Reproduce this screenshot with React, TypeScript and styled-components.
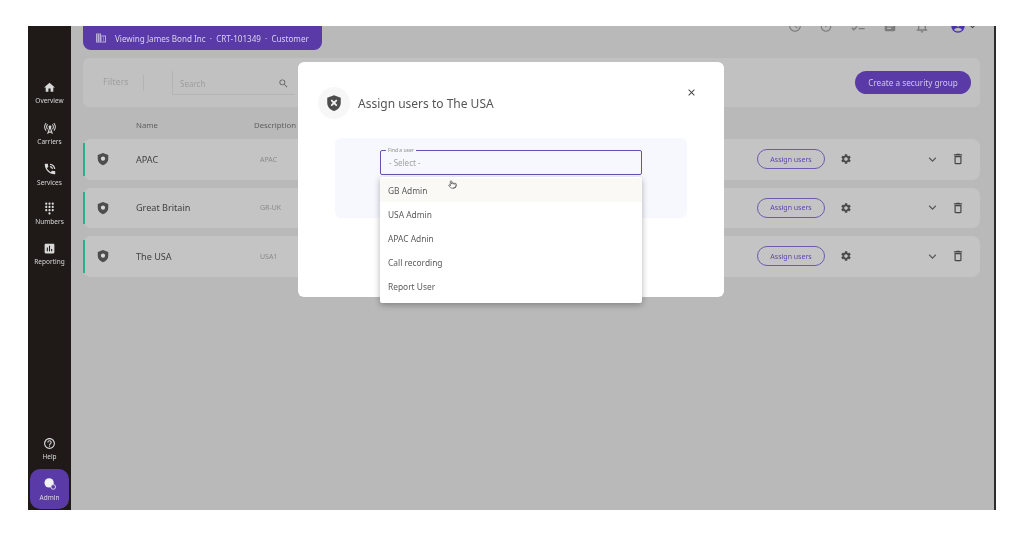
import React, { FC } from 'react';
import styled, { createGlobalStyle } from 'styled-components';
import {
  MdHome,
  MdCellTower,
  MdPhoneInTalk,
  MdDialpad,
  MdAssessment,
  MdHelpOutline,
  MdOutlineDomain,
  MdSearch,
  MdSettings,
  MdExpandMore,
  MdDeleteOutline,
  MdClose,
  MdAccessTime,
  MdOutlineTimer,
  MdChecklist,
  MdAssignment,
  MdNotificationsNone,
  MdAccountCircle,
} from 'react-icons/md';
import { Pointer } from 'lucide-react';

const GlobalStyle = createGlobalStyle`
  html, body {
    margin: 0;
    background: #fff;
  }
  * {
    box-sizing: border-box;
  }
  body {
    font-family: "Noto Sans", "Open Sans", sans-serif;
  }
`;

const ShieldIcon: FC<{ size: number; mark?: 'dot' | 'x' }> = ({ size, mark = 'dot' }) => (
  <svg width={size} height={size} viewBox="0 0 24 24">
    <path d="M12 1.5 21 5v6.5c0 5.4-3.7 9.4-9 11-5.3-1.6-9-5.6-9-11V5z" fill="#4d4d4d" />
    {mark === 'dot' ? (
      <circle cx="12" cy="11.5" r="3.6" fill="#d8d8d8" />
    ) : (
      <path d="M9 8.7 15 14.7M15 8.7 9 14.7" stroke="#f2f2f2" strokeWidth="2.4" strokeLinecap="round" />
    )}
  </svg>
);

const AdminIcon: FC = () => (
  <svg width={14} height={14} viewBox="0 0 24 24">
    <circle cx="10.5" cy="10" r="8" fill="#f2f2f2" />
    <circle cx="17.5" cy="17" r="4" fill="#5a3aa6" stroke="#e4def2" strokeWidth="1.6" />
  </svg>
);

const navItems = [
  { label: 'Overview', icon: <MdHome size={13} /> },
  { label: 'Carriers', icon: <MdCellTower size={14} /> },
  { label: 'Services', icon: <MdPhoneInTalk size={14} /> },
  { label: 'Numbers', icon: <MdDialpad size={13} /> },
  { label: 'Reporting', icon: <MdAssessment size={13} /> },
];

const groups = [
  { name: 'APAC', code: 'APAC' },
  { name: 'Great Britain', code: 'GR-UK' },
  { name: 'The USA', code: 'USA1' },
];

const users = ['GB Admin', 'USA Admin', 'APAC Adnin', 'Call recording', 'Report User'];

const App: FC = () => (
  <>
    <GlobalStyle />
    <Page>
      <Frame>
        <Sidebar>
          <NavList>
            {navItems.map(item => (
              <NavItem key={item.label}>
                {item.icon}
                <span>{item.label}</span>
              </NavItem>
            ))}
          </NavList>
          <NavItem>
            <MdHelpOutline size={13} />
            <span>Help</span>
          </NavItem>
          <AdminButton>
            <AdminIcon />
            <span>Admin</span>
          </AdminButton>
        </Sidebar>

        <Main>
          <TopBar>
            <Banner>
              <MdOutlineDomain size={12} color="#b9addb" />
              <span>Viewing James Bond Inc &nbsp;·&nbsp; CRT-101349 &nbsp;·&nbsp; Customer</span>
            </Banner>
            <TopIcons>
              <MdAccessTime size={14} />
              <MdOutlineTimer size={14} />
              <MdChecklist size={16} />
              <MdAssignment size={14} />
              <MdNotificationsNone size={16} />
              <Avatar>
                <MdAccountCircle size={16} color="#4b33a8" />
                <MdExpandMore size={11} color="#333" />
              </Avatar>
            </TopIcons>
          </TopBar>

          <FilterBar>
            <FiltersLabel>Filters</FiltersLabel>
            <SearchBox>
              <span>Search</span>
              <MdSearch size={11} color="#666" />
            </SearchBox>
            <CreateButton>Create a security group</CreateButton>
          </FilterBar>

          <TableHead>
            <NameHead>Name</NameHead>
            <span>Description</span>
          </TableHead>

          <Rows>
            {groups.map(group => (
              <Row key={group.name}>
                <RowIcon>
                  <ShieldIcon size={14} />
                </RowIcon>
                <RowName>{group.name}</RowName>
                <RowCode>{group.code}</RowCode>
                <AssignButton>Assign users</AssignButton>
                <MdSettings size={12} color="#4a4a4a" />
                <RowEnd>
                  <MdExpandMore size={15} color="#5a5a5a" />
                  <MdDeleteOutline size={14} color="#444" />
                </RowEnd>
              </Row>
            ))}
          </Rows>
        </Main>

        <Overlay>
          <Modal>
            <ModalHead>
              <ModalBadge>
                <ShieldIcon size={18} mark="x" />
              </ModalBadge>
              <ModalTitle>Assign users to The USA</ModalTitle>
              <CloseButton>
                <MdClose size={11} />
              </CloseButton>
            </ModalHead>
            <ModalPanel>
              <SelectField>
                <SelectLabel>Find a user</SelectLabel>
                - Select -
              </SelectField>
              <Dropdown>
                {users.map((user, i) => (
                  <Option key={user} active={i === 0}>
                    {user}
                  </Option>
                ))}
                <Cursor>
                  <Pointer size={9} strokeWidth={2} />
                </Cursor>
              </Dropdown>
            </ModalPanel>
          </Modal>
        </Overlay>
      </Frame>
    </Page>
  </>
);

export default App;

const Page = styled.div`
  width: 1024px;
  height: 536px;
  padding: 26px 28px;
  background: #fff;
  overflow: hidden;
`;

const Frame = styled.div`
  position: relative;
  display: flex;
  width: 968px;
  height: 484px;
  overflow: hidden;
  background: #b9b9b9;
  border-right: 2px solid #2b2b2b;
  filter: blur(0.3px);
`;

const Sidebar = styled.nav`
  display: flex;
  flex-direction: column;
  align-items: center;
  flex: 0 0 43px;
  padding: 55px 0 1px;
  background: #1f1a18;
`;

const NavList = styled.div`
  display: flex;
  flex: 1;
  flex-direction: column;
`;

const NavItem = styled.div`
  display: flex;
  flex-direction: column;
  align-items: center;
  gap: 2px;
  height: 40.3px;
  color: #d8d8d8;
  font-size: 6.5px;
  line-height: 9px;
  white-space: nowrap;
  svg {
    flex-shrink: 0;
  }
`;

const AdminButton = styled.div`
  display: flex;
  flex-direction: column;
  align-items: center;
  justify-content: center;
  gap: 2px;
  width: 39px;
  height: 40px;
  margin-top: -8px;
  border-radius: 10px;
  background: #5a3aa6;
  color: #ddd6ee;
  font-size: 6.5px;
  line-height: 9px;
`;

const Main = styled.main`
  display: flex;
  flex: 1;
  flex-direction: column;
  min-width: 0;
  padding: 0 14px 0 12px;
`;

const TopBar = styled.div`
  display: flex;
  justify-content: space-between;
  align-items: flex-start;
  height: 32px;
`;

const Banner = styled.div`
  display: flex;
  align-items: center;
  gap: 8px;
  width: 239px;
  height: 24px;
  padding-left: 12px;
  border-radius: 0 0 8px 8px;
  background: #5a3aa6;
  color: #d9d2ec;
  font-size: 8.1px;
  white-space: nowrap;
`;

const TopIcons = styled.div`
  display: flex;
  align-items: center;
  gap: 17px;
  height: 14px;
  margin-top: -7px;
  padding-right: 2px;
  color: #7c7c7c;
`;

const Avatar = styled.div`
  display: flex;
  align-items: center;
  gap: 1px;
  margin-left: 3px;
`;

const FilterBar = styled.div`
  display: flex;
  align-items: center;
  height: 49px;
  padding: 0 9px 0 20px;
  border-radius: 6px;
  background: #c1c1c1;
`;

const FiltersLabel = styled.div`
  width: 41px;
  height: 16px;
  border-right: 1px solid #b4b4b4;
  color: #a0a0a0;
  font-size: 9px;
  line-height: 14px;
`;

const SearchBox = styled.div`
  display: flex;
  align-items: center;
  justify-content: space-between;
  width: 123px;
  height: 24px;
  margin-left: 28px;
  padding: 2px 6px 0 7px;
  border-left: 1px solid #b4b4b4;
  border-bottom: 1px solid #b4b4b4;
  color: #9e9e9e;
  font-size: 8px;
`;

const CreateButton = styled.div`
  display: flex;
  align-items: center;
  justify-content: center;
  width: 116px;
  height: 23px;
  margin-left: auto;
  border-radius: 12px;
  background: #5a3aa6;
  color: #cfc6e6;
  font-size: 8.2px;
  white-space: nowrap;
`;

const TableHead = styled.div`
  display: flex;
  align-items: center;
  height: 32px;
  padding-top: 4px;
  color: #5f5f5f;
  font-size: 7.8px;
`;

const NameHead = styled.span`
  width: 171px;
  padding-left: 53px;
`;

const Rows = styled.div`
  display: flex;
  flex-direction: column;
  gap: 8px;
`;

const Row = styled.div`
  position: relative;
  display: flex;
  align-items: center;
  height: 40.5px;
  border-radius: 8px;
  background: #c4c4c4;
  &::before {
    content: '';
    position: absolute;
    left: 0;
    top: 4px;
    bottom: 4px;
    width: 1.5px;
    background: #27b08f;
  }
`;

const RowIcon = styled.div`
  display: flex;
  width: 53px;
  padding-left: 13px;
`;

const RowName = styled.div`
  width: 124px;
  color: #414141;
  font-size: 9.1px;
`;

const RowCode = styled.div`
  width: 497px;
  color: #8a8a8a;
  font-size: 7px;
`;

const AssignButton = styled.div`
  display: flex;
  align-items: center;
  justify-content: center;
  width: 68px;
  height: 20px;
  margin-right: 15px;
  border: 1px solid #6f5ab0;
  border-radius: 10px;
  color: #5f45ae;
  font-size: 7px;
  white-space: nowrap;
`;

const RowEnd = styled.div`
  display: flex;
  align-items: center;
  gap: 11px;
  margin-left: auto;
  padding-right: 15px;
`;

const Overlay = styled.div`
  position: absolute;
  inset: 0;
  display: flex;
  justify-content: center;
  padding-top: 36px;
`;

const Modal = styled.div`
  width: 426px;
  height: 235px;
  padding: 26px 37px 0;
  border-radius: 6px;
  background: #fff;
`;

const ModalHead = styled.div`
  position: relative;
  display: flex;
  align-items: center;
  gap: 8px;
  height: 30px;
  margin-left: -17px;
`;

const ModalBadge = styled.div`
  display: flex;
  align-items: center;
  justify-content: center;
  width: 32px;
  height: 32px;
  border-radius: 50%;
  background: #f7f7f7;
`;

const ModalTitle = styled.div`
  color: #555;
  font-size: 12px;
`;

const CloseButton = styled.div`
  position: absolute;
  top: -1px;
  right: -10px;
  display: flex;
  color: #444;
`;

const ModalPanel = styled.div`
  position: relative;
  width: 352px;
  height: 80px;
  margin-top: 20px;
  padding: 12px 45px 0;
  border-radius: 6px;
  background: #f7f7fe;
`;

const SelectField = styled.div`
  position: relative;
  height: 25px;
  padding: 6px 8px 0;
  border: 1px solid #6a50b0;
  border-radius: 2px;
  color: #a2a2a2;
  font-size: 8px;
  line-height: 12px;
`;

const SelectLabel = styled.span`
  position: absolute;
  top: -4px;
  left: 5px;
  padding: 0 2px;
  background: #f7f7fe;
  color: #8d8d8d;
  font-size: 5px;
  line-height: 7px;
`;

const Dropdown = styled.div`
  position: absolute;
  top: 39px;
  left: 45px;
  right: 45px;
  height: 126px;
  padding-top: 1px;
  border-radius: 2px;
  background: #fff;
  box-shadow: 0 2px 6px rgba(0, 0, 0, 0.3);
`;

const Option = styled.div<{ active?: boolean }>`
  display: flex;
  align-items: center;
  height: 24.2px;
  padding-left: 8px;
  background: ${props => (props.active ? '#faf9f6' : 'transparent')};
  color: #5a5a5a;
  font-size: 8.4px;
`;

const Cursor = styled.div`
  position: absolute;
  top: 3px;
  left: 68px;
  display: flex;
  color: #555;
`;
